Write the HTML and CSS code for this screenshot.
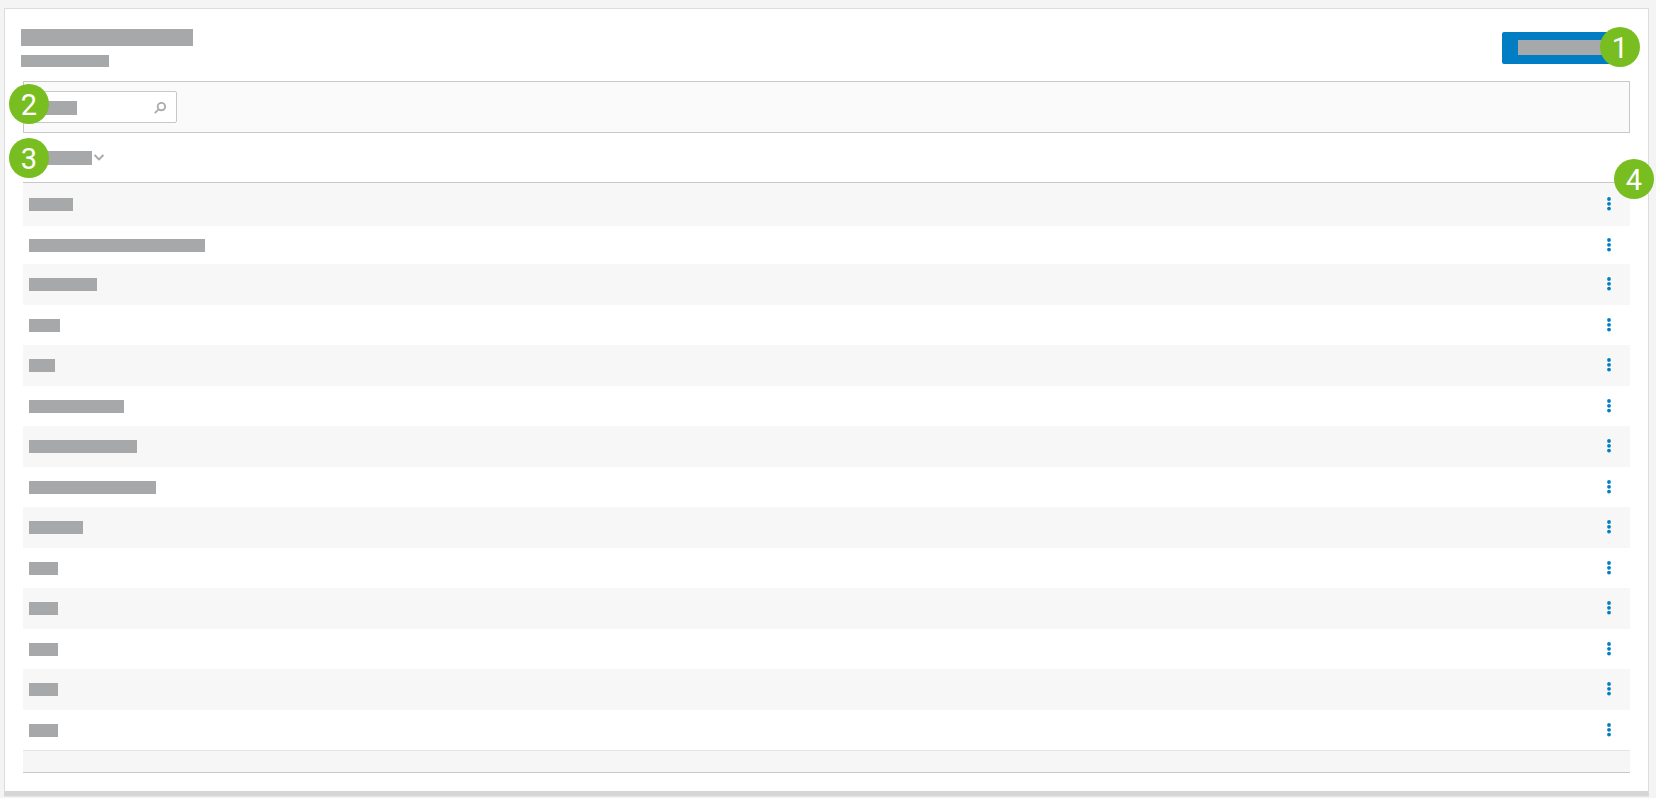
FILE: index.html
```html
<!DOCTYPE html>
<html lang="en">

<head>
    <meta charset="UTF-8">
    <meta name="viewport" content="width=device-width, initial-scale=1.0">
    <title>List</title>
    <link rel="stylesheet" href="styles.css">
</head>

<body>

    <svg class="symbols" aria-hidden="true">
        <symbol id="dots" viewBox="0 0 4 14">
            <circle cx="2" cy="2" r="1.9" />
            <circle cx="2" cy="6.8" r="1.9" />
            <circle cx="2" cy="11.6" r="1.9" />
        </symbol>
    </svg>

    <main class="panel">
        <header class="header">
            <div class="titles">
                <div class="bar bar-title"></div>
                <div class="bar bar-subtitle"></div>
            </div>
            <div class="action">
                <button class="button" type="button" aria-label="Add"><span class="bar bar-button"></span></button>
                <span class="badge badge-1">1</span>
            </div>
        </header>

        <div class="filter">
            <label class="search">
                <span class="bar bar-search"></span>
                <input class="search-input" type="text" aria-label="Search">
                <svg class="search-icon" viewBox="0 0 12 12">
                    <circle cx="7.4" cy="4.6" r="3.7" />
                    <path d="M4.8 7.2L.8 11.2" />
                </svg>
            </label>
            <span class="badge badge-2">2</span>
        </div>

        <table class="table">
            <thead>
                <tr>
                    <th>
                        <button class="sort" type="button" aria-label="Sort by name">
                            <span class="bar bar-sort"></span>
                            <svg class="sort-icon" viewBox="0 0 10 7">
                                <path d="M.6 1L5 5.4L9.4 1" />
                            </svg>
                        </button>
                        <span class="badge badge-3">3</span>
                    </th>
                    <th><span class="badge badge-4">4</span></th>
                </tr>
            </thead>
            <tbody>
                <tr>
                    <td><div class="bar w-44"></div></td>
                    <td class="menu"><button class="more" type="button" aria-label="More"><svg><use href="#dots" /></svg></button></td>
                </tr>
                <tr>
                    <td><div class="bar w-176"></div></td>
                    <td class="menu"><button class="more" type="button" aria-label="More"><svg><use href="#dots" /></svg></button></td>
                </tr>
                <tr>
                    <td><div class="bar w-68"></div></td>
                    <td class="menu"><button class="more" type="button" aria-label="More"><svg><use href="#dots" /></svg></button></td>
                </tr>
                <tr>
                    <td><div class="bar w-31"></div></td>
                    <td class="menu"><button class="more" type="button" aria-label="More"><svg><use href="#dots" /></svg></button></td>
                </tr>
                <tr>
                    <td><div class="bar w-26"></div></td>
                    <td class="menu"><button class="more" type="button" aria-label="More"><svg><use href="#dots" /></svg></button></td>
                </tr>
                <tr>
                    <td><div class="bar w-95"></div></td>
                    <td class="menu"><button class="more" type="button" aria-label="More"><svg><use href="#dots" /></svg></button></td>
                </tr>
                <tr>
                    <td><div class="bar w-108"></div></td>
                    <td class="menu"><button class="more" type="button" aria-label="More"><svg><use href="#dots" /></svg></button></td>
                </tr>
                <tr>
                    <td><div class="bar w-127"></div></td>
                    <td class="menu"><button class="more" type="button" aria-label="More"><svg><use href="#dots" /></svg></button></td>
                </tr>
                <tr>
                    <td><div class="bar w-54"></div></td>
                    <td class="menu"><button class="more" type="button" aria-label="More"><svg><use href="#dots" /></svg></button></td>
                </tr>
                <tr>
                    <td><div class="bar w-29"></div></td>
                    <td class="menu"><button class="more" type="button" aria-label="More"><svg><use href="#dots" /></svg></button></td>
                </tr>
                <tr>
                    <td><div class="bar w-29"></div></td>
                    <td class="menu"><button class="more" type="button" aria-label="More"><svg><use href="#dots" /></svg></button></td>
                </tr>
                <tr>
                    <td><div class="bar w-29"></div></td>
                    <td class="menu"><button class="more" type="button" aria-label="More"><svg><use href="#dots" /></svg></button></td>
                </tr>
                <tr>
                    <td><div class="bar w-29"></div></td>
                    <td class="menu"><button class="more" type="button" aria-label="More"><svg><use href="#dots" /></svg></button></td>
                </tr>
                <tr>
                    <td><div class="bar w-29"></div></td>
                    <td class="menu"><button class="more" type="button" aria-label="More"><svg><use href="#dots" /></svg></button></td>
                </tr>
            </tbody>
        </table>
        <div class="table-footer"></div>
    </main>

</body>

</html>
```
FILE: styles.css
```css
* {
    margin: 0;
    padding: 0;
    box-sizing: border-box;
}

body {
    padding: 8px 7px 2px 4px;
    background-color: #f4f4f4;
    font-family: Roboto, "Liberation Sans", Arial, sans-serif;
}

.symbols {
    display: none;
}

.panel {
    padding: 18px 18px;
    background-color: #fff;
    border: 1px solid #dcdcdc;
    border-bottom: 5px solid #d6d6d6;
    box-shadow: 0 1px #e6e6e6;
}

.header {
    display: flex;
    justify-content: space-between;
    height: 54px;
    padding-top: 2px;
    margin-left: -2px;
}

/* grey placeholder blocks */
.bar {
    display: block;
    height: 13px;
    background-color: #a7a8aa;
}

.bar-title {
    width: 172px;
    height: 17px;
    margin-bottom: 9px;
}

.bar-subtitle {
    width: 88px;
    height: 12px;
}

.action {
    position: relative;
    padding-top: 3px;
}

.button {
    display: flex;
    align-items: center;
    width: 128px;
    height: 32px;
    padding: 0 16px;
    background-color: #007dc3;
    border: none;
    border-radius: 2px;
}

.bar-button {
    width: 100%;
    height: 15px;
    margin-bottom: 1px;
}

.filter {
    position: relative;
    padding: 9px;
    background-color: #fafafa;
    border: 1px solid #c8c8c8;
}

.search {
    display: flex;
    align-items: center;
    width: 144px;
    height: 32px;
    padding: 0 10px;
    background-color: #fff;
    border: 1px solid #c8c8c8;
    border-radius: 2px;
}

.bar-search {
    width: 33px;
    height: 14px;
    margin-top: 2px;
}

.search-input {
    flex: 1;
    min-width: 0;
    height: 28px;
    background: none;
    border: none;
    outline: none;
}

.search-icon {
    width: 12px;
    height: 12px;
    margin-top: 2px;
    fill: none;
    stroke: #adadad;
    stroke-width: 1.9;
}

.table {
    width: 100%;
    border-collapse: separate;
    border-spacing: 0;
}

.table th {
    position: relative;
    height: 50px;
    text-align: left;
    border-bottom: 1px solid #c8c8c8;
}

.sort {
    display: flex;
    align-items: center;
    gap: 2px;
    padding-left: 10px;
    background: none;
    border: none;
}

.bar-sort {
    width: 59px;
    height: 14px;
}

.sort-icon {
    width: 10px;
    height: 7px;
    fill: none;
    stroke: #a7a8aa;
    stroke-width: 1.9;
}

.table td {
    height: 40px;
    padding-left: 6px;
    vertical-align: middle;
}

.table tbody tr:nth-child(odd) td {
    height: 41px;
    background-color: #f7f7f7;
}

.table tbody tr:first-child td {
    height: 43px;
}

.table tbody tr:nth-child(2) td {
    height: 38px;
}

.table .menu {
    width: 32px;
    padding: 0 0 1px 4px;
}

.more {
    display: flex;
    align-items: center;
    justify-content: center;
    width: 14px;
    height: 24px;
    background: none;
    border: none;
}

.more svg {
    width: 4px;
    height: 14px;
    fill: #007dc3;
}

.w-26 {
    width: 26px;
}

.w-29 {
    width: 29px;
}

.w-31 {
    width: 31px;
}

.w-44 {
    width: 44px;
}

.w-54 {
    width: 54px;
}

.w-68 {
    width: 68px;
}

.w-95 {
    width: 95px;
}

.w-108 {
    width: 108px;
}

.w-127 {
    width: 127px;
}

.w-176 {
    width: 176px;
}

.table-footer {
    height: 23px;
    background-color: #f6f6f6;
    border-top: 1px solid #e4e4e4;
    border-bottom: 1px solid #c8c8c8;
}

/* numbered callouts */
.badge {
    position: absolute;
    width: 40px;
    height: 40px;
    border-radius: 50%;
    background-color: #78be20;
    color: #fff;
    font-size: 29px;
    font-weight: 400;
    line-height: 42px;
    text-align: center;
}

.badge-1 {
    top: -2px;
    right: -10px;
}

.badge-2 {
    top: 2px;
    left: -15px;
}

.badge-3 {
    top: 5px;
    left: -14px;
}

.badge-4 {
    top: 26px;
    right: -24px;
}
```
